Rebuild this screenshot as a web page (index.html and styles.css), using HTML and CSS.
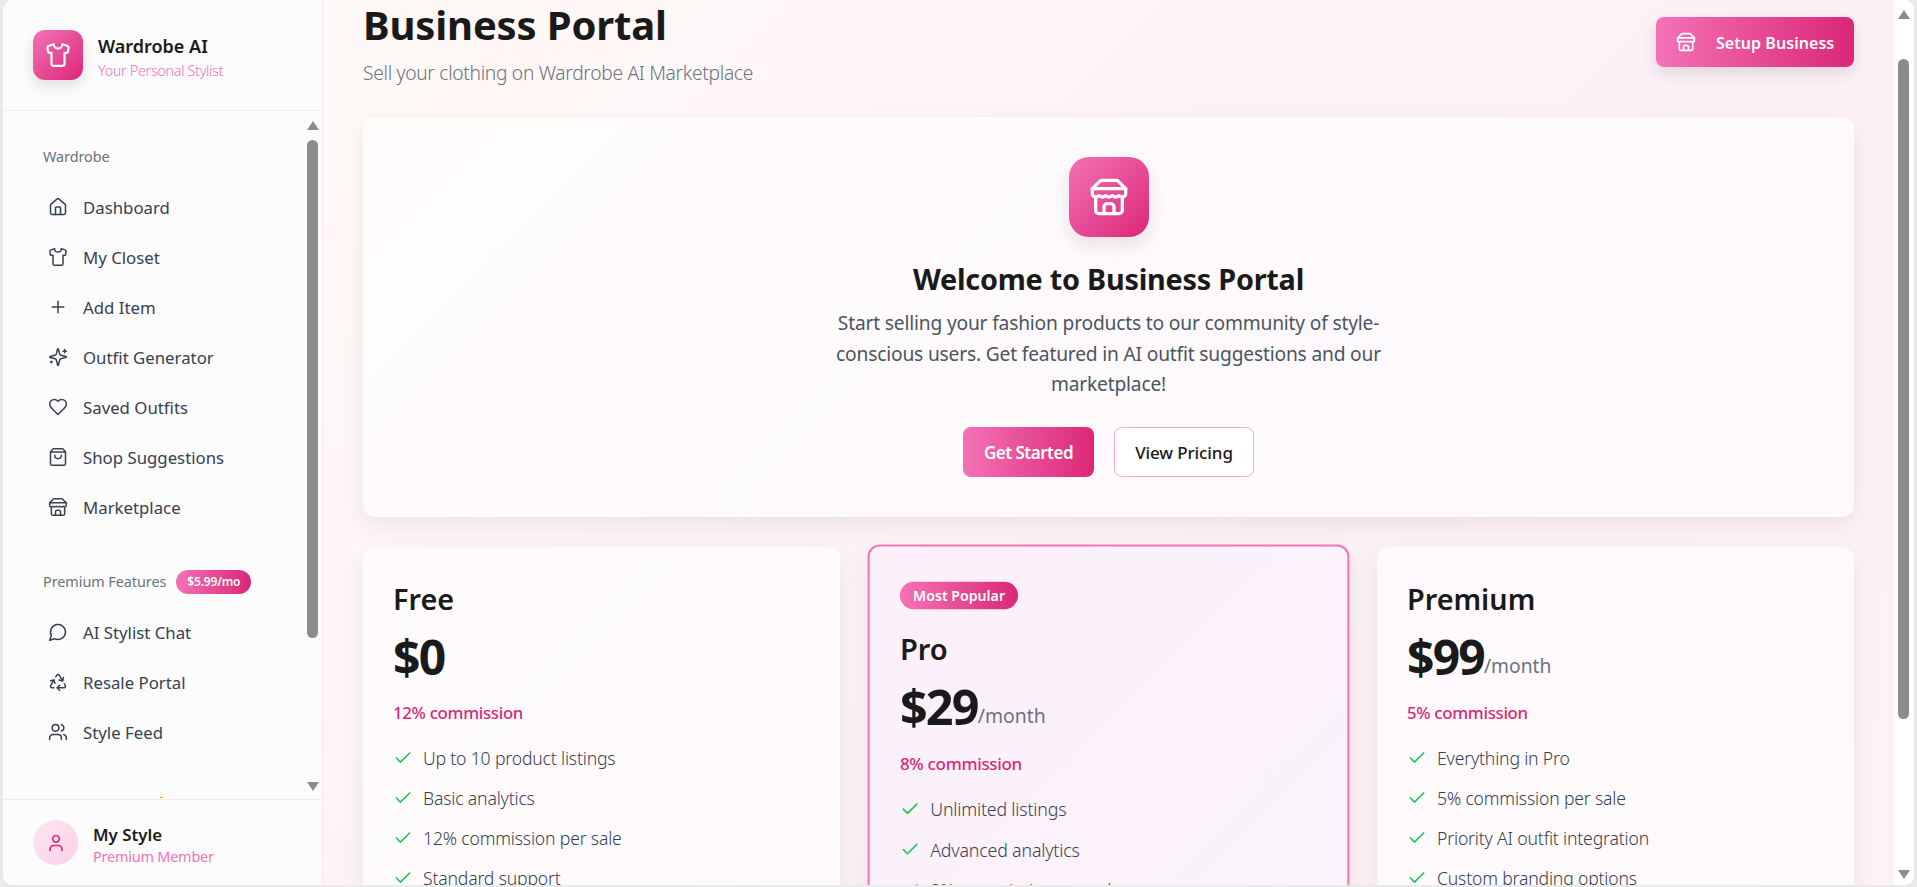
FILE: index.html
```html
<!DOCTYPE html>
<html lang="en">
<head>
  <meta charset="UTF-8" />
  <title>Business Portal - Wardrobe AI</title>
  <link rel="stylesheet" href="styles.css">
</head>
<body>
  <svg class="icon-defs" aria-hidden="true">
    <symbol id="i-home" viewBox="0 0 24 24"><path d="M15 21v-8a1 1 0 0 0-1-1h-4a1 1 0 0 0-1 1v8"/><path d="M3 10a2 2 0 0 1 .709-1.528l7-5.999a2 2 0 0 1 2.582 0l7 5.999A2 2 0 0 1 21 10v9a2 2 0 0 1-2 2H5a2 2 0 0 1-2-2z"/></symbol>
    <symbol id="i-shirt" viewBox="0 0 24 24"><path d="M20.38 3.46 16 2a4 4 0 0 1-8 0L3.62 3.46a2 2 0 0 0-1.34 2.23l.58 3.47a1 1 0 0 0 .99.84H6v10c0 1.1.9 2 2 2h8a2 2 0 0 0 2-2V10h2.15a1 1 0 0 0 .99-.84l.58-3.47a2 2 0 0 0-1.34-2.23z"/></symbol>
    <symbol id="i-plus" viewBox="0 0 24 24"><path d="M5 12h14"/><path d="M12 5v14"/></symbol>
    <symbol id="i-sparkles" viewBox="0 0 24 24"><path d="M9.937 15.5A2 2 0 0 0 8.5 14.063l-6.135-1.582a.5.5 0 0 1 0-.962L8.5 9.936A2 2 0 0 0 9.937 8.5l1.582-6.135a.5.5 0 0 1 .963 0L14.063 8.5A2 2 0 0 0 15.5 9.937l6.135 1.581a.5.5 0 0 1 0 .964L15.5 14.063a2 2 0 0 0-1.437 1.437l-1.582 6.135a.5.5 0 0 1-.963 0z"/><path d="M20 3v4"/><path d="M22 5h-4"/><path d="M4 17v2"/><path d="M5 18H3"/></symbol>
    <symbol id="i-heart" viewBox="0 0 24 24"><path d="M19 14c1.49-1.46 3-3.21 3-5.5A5.5 5.5 0 0 0 16.5 3c-1.76 0-3 .5-4.5 2-1.5-1.5-2.74-2-4.5-2A5.5 5.5 0 0 0 2 8.5c0 2.3 1.5 4.05 3 5.5l7 7Z"/></symbol>
    <symbol id="i-bag" viewBox="0 0 24 24"><path d="M16 10a4 4 0 0 1-8 0"/><path d="M3.103 6.034h17.794"/><path d="M3.4 5.467a2 2 0 0 0-.4 1.2V20a2 2 0 0 0 2 2h14a2 2 0 0 0 2-2V6.667a2 2 0 0 0-.4-1.2l-2-2.667A2 2 0 0 0 17 2H7a2 2 0 0 0-1.6.8z"/></symbol>
    <symbol id="i-store" viewBox="0 0 24 24"><path d="m2 7 4.41-4.41A2 2 0 0 1 7.83 2h8.34a2 2 0 0 1 1.42.59L22 7"/><path d="M4 12v8a2 2 0 0 0 2 2h12a2 2 0 0 0 2-2v-8"/><path d="M15 22v-4a2 2 0 0 0-2-2h-2a2 2 0 0 0-2 2v4"/><path d="M2 7h20"/><path d="M22 7v3a2 2 0 0 1-2 2a2.7 2.7 0 0 1-1.59-.63.7.7 0 0 0-.82 0A2.7 2.7 0 0 1 16 12a2.7 2.7 0 0 1-1.59-.63.7.7 0 0 0-.82 0A2.7 2.7 0 0 1 12 12a2.7 2.7 0 0 1-1.59-.63.7.7 0 0 0-.82 0A2.7 2.7 0 0 1 8 12a2.7 2.7 0 0 1-1.59-.63.7.7 0 0 0-.82 0A2.7 2.7 0 0 1 4 12a2 2 0 0 1-2-2V7"/></symbol>
    <symbol id="i-chat" viewBox="0 0 24 24"><path d="M7.9 20A9 9 0 1 0 4 16.1L2 22Z"/></symbol>
    <symbol id="i-recycle" viewBox="0 0 24 24"><path d="M7 19H4.815a1.83 1.83 0 0 1-1.57-.881 1.785 1.785 0 0 1-.004-1.784L7.196 9.5"/><path d="M11 19h8.203a1.83 1.83 0 0 0 1.556-.89 1.784 1.784 0 0 0 0-1.775l-1.226-2.12"/><path d="m14 16-3 3 3 3"/><path d="M8.293 13.596 7.196 9.5 3.1 10.598"/><path d="m9.344 5.811 1.093-1.892A1.83 1.83 0 0 1 11.985 3a1.784 1.784 0 0 1 1.546.888l3.943 6.843"/><path d="m13.378 9.633 4.096 1.098 1.097-4.096"/></symbol>
    <symbol id="i-users" viewBox="0 0 24 24"><path d="M16 21v-2a4 4 0 0 0-4-4H6a4 4 0 0 0-4 4v2"/><circle cx="9" cy="7" r="4"/><path d="M22 21v-2a4 4 0 0 0-3-3.87"/><path d="M16 3.13a4 4 0 0 1 0 7.75"/></symbol>
    <symbol id="i-user" viewBox="0 0 24 24"><path d="M19 21v-2a4 4 0 0 0-4-4H9a4 4 0 0 0-4 4v2"/><circle cx="12" cy="7" r="4"/></symbol>
    <symbol id="i-check" viewBox="0 0 24 24"><path d="M20 6 9 17l-5-5"/></symbol>
  </svg>

  <div class="app">
    <aside class="sidebar">
      <div class="brand">
        <div class="brand-logo"><svg class="icon icon-brand"><use href="#i-shirt"/></svg></div>
        <div>
          <div class="brand-name">Wardrobe AI</div>
          <div class="brand-tag">Your Personal Stylist</div>
        </div>
      </div>

      <div class="side-scroll">
        <nav class="nav">
          <div class="nav-label">Wardrobe</div>
          <a class="nav-item"><svg class="icon"><use href="#i-home"/></svg>Dashboard</a>
          <a class="nav-item"><svg class="icon"><use href="#i-shirt"/></svg>My Closet</a>
          <a class="nav-item"><svg class="icon"><use href="#i-plus"/></svg>Add Item</a>
          <a class="nav-item"><svg class="icon"><use href="#i-sparkles"/></svg>Outfit Generator</a>
          <a class="nav-item"><svg class="icon"><use href="#i-heart"/></svg>Saved Outfits</a>
          <a class="nav-item"><svg class="icon"><use href="#i-bag"/></svg>Shop Suggestions</a>
          <a class="nav-item"><svg class="icon"><use href="#i-store"/></svg>Marketplace</a>

          <div class="nav-label nav-label-premium">Premium Features <span class="badge-price">$5.99/mo</span></div>
          <a class="nav-item"><svg class="icon"><use href="#i-chat"/></svg>AI Stylist Chat</a>
          <a class="nav-item"><svg class="icon"><use href="#i-recycle"/></svg>Resale Portal</a>
          <a class="nav-item"><svg class="icon"><use href="#i-users"/></svg>Style Feed</a>
          <div class="nav-next"></div>
        </nav>
        <div class="scrollbar scrollbar-side">
          <span class="arrow arrow-up"></span>
          <span class="thumb"></span>
          <span class="arrow arrow-down"></span>
        </div>
      </div>

      <div class="profile">
        <div class="avatar"><svg class="icon icon-avatar"><use href="#i-user"/></svg></div>
        <div class="profile-text">
          <div class="profile-name">My Style</div>
          <div class="profile-plan">Premium Member</div>
        </div>
      </div>
    </aside>

    <div class="main-wrap">
      <main class="main">
        <header class="page-head">
          <div>
            <h1>Business Portal</h1>
            <p class="page-sub">Sell your clothing on Wardrobe AI Marketplace</p>
          </div>
          <button class="btn btn-primary btn-setup"><svg class="icon"><use href="#i-store"/></svg>Setup Business</button>
        </header>

        <section class="hero card">
          <div class="hero-icon"><svg class="icon icon-hero"><use href="#i-store"/></svg></div>
          <h2>Welcome to Business Portal</h2>
          <p>Start selling your fashion products to our community of style-conscious users. Get featured in AI outfit suggestions and our marketplace!</p>
          <div class="hero-actions">
            <button class="btn btn-primary">Get Started</button>
            <button class="btn btn-outline">View Pricing</button>
          </div>
        </section>

        <section class="plans">
          <article class="plan card">
            <h3>Free</h3>
            <div class="price">$0</div>
            <div class="commission">12% commission</div>
            <ul>
              <li><svg class="icon icon-check"><use href="#i-check"/></svg>Up to 10 product listings</li>
              <li><svg class="icon icon-check"><use href="#i-check"/></svg>Basic analytics</li>
              <li><svg class="icon icon-check"><use href="#i-check"/></svg>12% commission per sale</li>
              <li><svg class="icon icon-check"><use href="#i-check"/></svg>Standard support</li>
            </ul>
          </article>

          <article class="plan plan-pro card">
            <span class="badge-popular">Most Popular</span>
            <h3>Pro</h3>
            <div class="price">$29<span>/month</span></div>
            <div class="commission">8% commission</div>
            <ul>
              <li><svg class="icon icon-check"><use href="#i-check"/></svg>Unlimited listings</li>
              <li><svg class="icon icon-check"><use href="#i-check"/></svg>Advanced analytics</li>
              <li><svg class="icon icon-check"><use href="#i-check"/></svg>8% commission per sale</li>
            </ul>
          </article>

          <article class="plan card">
            <h3>Premium</h3>
            <div class="price">$99<span>/month</span></div>
            <div class="commission">5% commission</div>
            <ul>
              <li><svg class="icon icon-check"><use href="#i-check"/></svg>Everything in Pro</li>
              <li><svg class="icon icon-check"><use href="#i-check"/></svg>5% commission per sale</li>
              <li><svg class="icon icon-check"><use href="#i-check"/></svg>Priority AI outfit integration</li>
              <li><svg class="icon icon-check"><use href="#i-check"/></svg>Custom branding options</li>
            </ul>
          </article>
        </section>
      </main>
      <div class="scrollbar scrollbar-main">
        <span class="arrow arrow-up"></span>
        <span class="thumb"></span>
        <span class="arrow arrow-down"></span>
      </div>
    </div>
  </div>
</body>
</html>
```

FILE: styles.css
```css
* {
  box-sizing: border-box;
}
html, body {
  height: 100%;
  margin: 0;
  overflow: hidden;
}
body {
  font-family: "Noto Sans", Arial, sans-serif;
  color: #1a1a1a;
  background: #e9eaea;
  padding: 0 3px 2px 3px;
}
.icon-defs {
  display: none;
}
.icon {
  width: 20px;
  height: 20px;
  flex: none;
  fill: none;
  stroke: currentColor;
  stroke-width: 2;
  stroke-linecap: round;
  stroke-linejoin: round;
}
.app {
  display: flex;
  height: 100%;
  border-radius: 10px;
  overflow: hidden;
  background: #fff;
}

/* sidebar */
.sidebar {
  width: 320px;
  flex: none;
  display: flex;
  flex-direction: column;
  background: #fcfcfc;
  border-right: 1px solid #fde7f3;
}
.brand {
  height: 111px;
  flex: none;
  display: flex;
  align-items: center;
  gap: 15px;
  padding: 0 30px;
  border-bottom: 1px solid #fde7f3;
}
.brand-logo {
  width: 50px;
  height: 50px;
  display: flex;
  align-items: center;
  justify-content: center;
  border-radius: 12px;
  color: #fff;
  background: linear-gradient(135deg, #f472b6, #db2777);
  box-shadow: 0 6px 14px rgba(0, 0, 0, 0.12);
}
.icon-brand {
  width: 26px;
  height: 26px;
}
.brand-name {
  margin-top: 4px;
  font-size: 18px;
  font-weight: 600;
  line-height: 24px;
}
.brand-tag {
  margin-top: 3px;
  font-size: 14.4px;
  font-weight: 300;
  line-height: 20px;
  color: #f472b6;
  letter-spacing: -0.33px;
}
.side-scroll {
  flex: 1;
  min-height: 0;
  display: flex;
  overflow: hidden;
}
.nav {
  flex: 1;
  padding: 30px 0 0 30px;
  overflow: hidden;
}
.nav-label {
  display: flex;
  align-items: flex-start;
  gap: 10px;
  height: 41px;
  padding-left: 10px;
  font-size: 14.4px;
  line-height: 32px;
  color: #6b7280;
  letter-spacing: -0.05px;
}
.nav-label-premium {
  align-items: center;
  height: 26px;
  margin-top: 37px;
  margin-bottom: 12px;
}
.badge-price {
  padding: 3px 11px;
  border-radius: 13px;
  font-size: 12px;
  font-weight: 600;
  line-height: 18px;
  color: #fff;
  background: linear-gradient(90deg, #f472b6, #db2777);
  letter-spacing: -0.2px;
}
.nav-item {
  display: flex;
  align-items: center;
  gap: 15px;
  height: 50px;
  padding-left: 15px;
  font-size: 16.8px;
  font-weight: 450;
  color: #374151;
}
.nav-item .icon {
  stroke-width: 1.8;
}
.nav-next {
  width: 3px;
  height: 1px;
  margin: 40px 0 0 127px;
  background: #f59e0b;
}
.profile {
  height: 86px;
  flex: none;
  display: flex;
  align-items: center;
  gap: 15px;
  padding: 0 30px;
  border-top: 1px solid #fde7f3;
}
.avatar {
  width: 45px;
  height: 45px;
  display: flex;
  align-items: center;
  justify-content: center;
  border-radius: 50%;
  color: #db2777;
  background: linear-gradient(135deg, #fce7f3, #fbcfe8);
}
.profile-text {
  padding-top: 7px;
}
.profile-name {
  font-size: 16.8px;
  font-weight: 600;
  line-height: 22px;
}
.profile-plan {
  font-size: 14.4px;
  line-height: 22px;
  color: #f472b6;
  letter-spacing: -0.18px;
}

/* drawn scrollbars */
.scrollbar {
  flex: none;
  display: flex;
  flex-direction: column;
  align-items: center;
}
.scrollbar-side {
  width: 17px;
  margin-right: 1px;
  padding: 10px 0 8px;
}
.scrollbar-main {
  width: 20px;
  padding: 10px 1px 6px 0;
  background: #fff;
}
.thumb {
  width: 11px;
  border-radius: 6px;
  background: #8c8c8c;
}
.scrollbar-side .thumb {
  height: 498px;
  margin-top: 10px;
  margin-bottom: auto;
}
.scrollbar-main .thumb {
  height: 660px;
  margin-top: 40px;
  margin-bottom: auto;
}
.arrow {
  width: 0;
  height: 0;
  border-left: 6px solid transparent;
  border-right: 6px solid transparent;
}
.arrow-up {
  border-bottom: 9px solid #8c8c8c;
}
.arrow-down {
  border-top: 9px solid #8c8c8c;
}

/* main */
.main-wrap {
  flex: 1;
  min-width: 0;
  display: flex;
}
.main {
  flex: 1;
  min-width: 0;
  padding: 0 40px;
  overflow: hidden;
  background: linear-gradient(135deg, #fef9f6 0%, #fdf1f8 60%, #fef2f5 100%);
}
.page-head {
  display: flex;
  justify-content: space-between;
  align-items: flex-start;
  height: 117px;
}
h1 {
  margin: 0;
  font-size: 40px;
  font-weight: 700;
  line-height: 50px;
  letter-spacing: -0.15px;
}
.page-sub {
  margin: 10px 0 0;
  font-size: 19.2px;
  font-weight: 300;
  line-height: 26px;
  color: #6b7280;
  letter-spacing: -0.3px;
}
.btn {
  height: 50px;
  display: inline-flex;
  align-items: center;
  justify-content: center;
  padding: 2px 20px 0;
  border: none;
  border-radius: 8px;
  font-family: inherit;
  font-size: 17px;
  font-weight: 600;
  letter-spacing: -0.5px;
  white-space: nowrap;
}
.btn-primary {
  color: #fff;
  background: linear-gradient(90deg, #f472b6, #db2777);
}
.btn-setup {
  width: 198px;
  margin-top: 17px;
  gap: 20px;
  justify-content: flex-start;
  font-size: 16px;
  letter-spacing: 0.05px;
  box-shadow: 0 6px 16px rgba(0, 0, 0, 0.12);
}
.btn-setup .icon {
  margin-top: -2px;
}
.btn-outline {
  color: #1a1a1a;
  background: #fff;
  border: 1px solid #f9a8d4;
  font-weight: 500;
  letter-spacing: -0.1px;
}
.card {
  border-radius: 12px;
  background: rgba(255, 255, 255, 0.6);
  box-shadow: 0 8px 24px rgba(0, 0, 0, 0.07);
}
.hero {
  height: 400px;
  display: flex;
  flex-direction: column;
  align-items: center;
  padding-top: 40px;
  text-align: center;
}
.hero-icon {
  width: 80px;
  height: 80px;
  display: flex;
  align-items: center;
  justify-content: center;
  border-radius: 20px;
  color: #fff;
  background: linear-gradient(135deg, #f472b6, #db2777);
  box-shadow: 0 8px 20px rgba(0, 0, 0, 0.1);
}
.icon-hero {
  width: 40px;
  height: 40px;
}
.hero h2 {
  margin: 23px 0 0;
  font-size: 28.8px;
  font-weight: 700;
  line-height: 38px;
  letter-spacing: -0.23px;
}
.hero p {
  width: 560px;
  margin: 10px 0 0;
  font-size: 19.2px;
  line-height: 30.6px;
  color: #4b5563;
  letter-spacing: -0.18px;
}
.hero-actions {
  display: flex;
  gap: 20px;
  margin-top: 27px;
}
.hero-actions .btn-primary {
  width: 131px;
}
.hero-actions .btn-outline {
  width: 140px;
}
.plans {
  display: grid;
  grid-template-columns: repeat(3, 1fr);
  gap: 30px;
  margin-top: 30px;
}
.plan {
  height: 500px;
  padding: 30px;
}
.plan-pro {
  border: 2px solid #f472b6;
  background: linear-gradient(135deg, #fcf0f9, #faf4fc);
  transform: scale(1.01);
}
.badge-popular {
  display: block;
  width: fit-content;
  margin: 5px 0 17px;
  padding: 3px 13px;
  border-radius: 14px;
  font-size: 14px;
  font-weight: 600;
  line-height: 21px;
  color: #fff;
  background: linear-gradient(90deg, #f472b6, #db2777);
}
.plan h3 {
  margin: 0;
  font-size: 28.8px;
  font-weight: 600;
  line-height: 44px;
}
.price {
  margin-top: 4px;
  font-size: 48px;
  font-weight: 700;
  line-height: 64px;
  letter-spacing: -1.8px;
}
.price span {
  font-size: 19.2px;
  font-weight: 400;
  line-height: 1;
  color: #6b7280;
  letter-spacing: 0;
  vertical-align: 2px;
}
.commission {
  margin-top: 12px;
  font-size: 16.8px;
  font-weight: 500;
  line-height: 24px;
  color: #db2777;
  letter-spacing: -0.3px;
}
.plan ul {
  list-style: none;
  margin: 13px 0 0;
  padding: 0;
}
.plan li {
  display: flex;
  align-items: center;
  gap: 10px;
  height: 40px;
  font-size: 17.6px;
  font-weight: 300;
  color: #374151;
  letter-spacing: -0.17px;
}
.icon-check {
  width: 20px;
  height: 20px;
  color: #22c55e;
}
```
